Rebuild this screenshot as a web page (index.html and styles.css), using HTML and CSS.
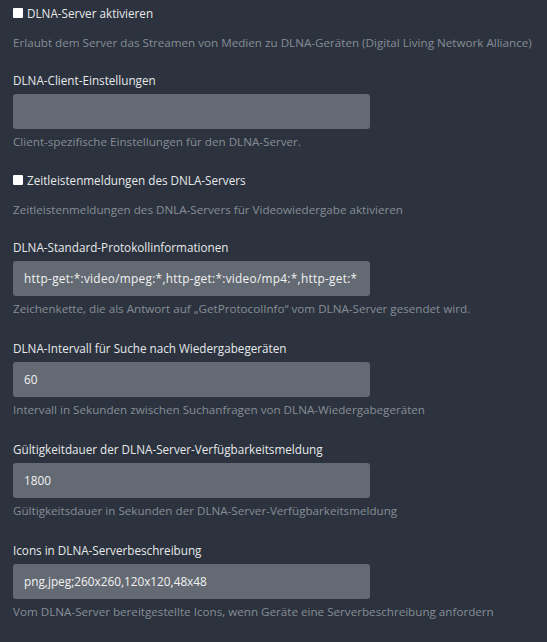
FILE: index.html
```html
<!DOCTYPE html>
<html lang="de">
<head>
<meta charset="utf-8">
<link rel="stylesheet" href="styles.css">
</head>
<body>
<div class="page">
  <div class="field check-field">
    <label class="check"><span class="box"></span>DLNA-Server aktivieren</label>
    <div class="help check-help">Erlaubt dem Server das Streamen von Medien zu DLNA-Geräten (Digital Living Network Alliance)</div>
  </div>
  <div class="field">
    <div class="label">DLNA-Client-Einstellungen</div>
    <div class="input"></div>
    <div class="help">Client-spezifische Einstellungen für den DLNA-Server.</div>
  </div>
  <div class="field check-field">
    <label class="check"><span class="box"></span>Zeitleistenmeldungen des DNLA-Servers</label>
    <div class="help check-help">Zeitleistenmeldungen des DNLA-Servers für Videowiedergabe aktivieren</div>
  </div>
  <div class="field">
    <div class="label">DLNA-Standard-Protokollinformationen</div>
    <div class="input input-protocol">http-get:*:video/mpeg:*,http-get:*:video/mp4:*,http-get:*</div>
    <div class="help">Zeichenkette, die als Antwort auf „GetProtocolInfo“ vom DLNA-Server gesendet wird.</div>
  </div>
  <div class="field">
    <div class="label">DLNA-Intervall für Suche nach Wiedergabegeräten</div>
    <div class="input">60</div>
    <div class="help">Intervall in Sekunden zwischen Suchanfragen von DLNA-Wiedergabegeräten</div>
  </div>
  <div class="field">
    <div class="label">Gültigkeitdauer der DLNA-Server-Verfügbarkeitsmeldung</div>
    <div class="input">1800</div>
    <div class="help">Gültigkeitsdauer in Sekunden der DLNA-Server-Verfügbarkeitsmeldung</div>
  </div>
  <div class="field">
    <div class="label">Icons in DLNA-Serverbeschreibung</div>
    <div class="input">png,jpeg;260x260,120x120,48x48</div>
    <div class="help">Vom DLNA-Server bereitgestellte Icons, wenn Geräte eine Serverbeschreibung anfordern</div>
  </div>
</div>
</body>
</html>
```
FILE: styles.css
```css
html, body {
  margin: 0;
  padding: 0;
  background: #2c333e;
  height: 100%;
}
body {
  font-family: "Open Sans", "DejaVu Sans", sans-serif;
  color: #e6e8ea;
}
.page {
  padding: 4px 13px 0 13px;
  display: flex;
  flex-direction: column;
}
.field {
  display: flex;
  flex-direction: column;
  margin-bottom: 21px;
}
.check-field {
  margin-bottom: 19px;
}
.check {
  display: flex;
  align-items: center;
  font-size: 11.7px;
  line-height: 18px;
  height: 18px;
}
.box {
  width: 10px;
  height: 10px;
  background: #ffffff;
  border-radius: 1px;
  margin-right: 4px;
  flex: none;
}
.label {
  font-size: 11.7px;
  line-height: 20px;
  height: 20px;
}
.input {
  margin-top: 4px;
  width: 357px;
  height: 35px;
  box-sizing: border-box;
  background: #646a73;
  border-radius: 3px;
  padding: 0 11px;
  font-size: 11.8px;
  line-height: 35px;
  color: #f2f2f2;
  white-space: nowrap;
  overflow: hidden;
}
.input-protocol {
  letter-spacing: 0.3px;
}
.help {
  margin-top: 5px;
  font-size: 11.65px;
  line-height: 16px;
  height: 16px;
  color: #878d96;
  white-space: nowrap;
}
.check-help {
  margin-top: 13px;
}
```
